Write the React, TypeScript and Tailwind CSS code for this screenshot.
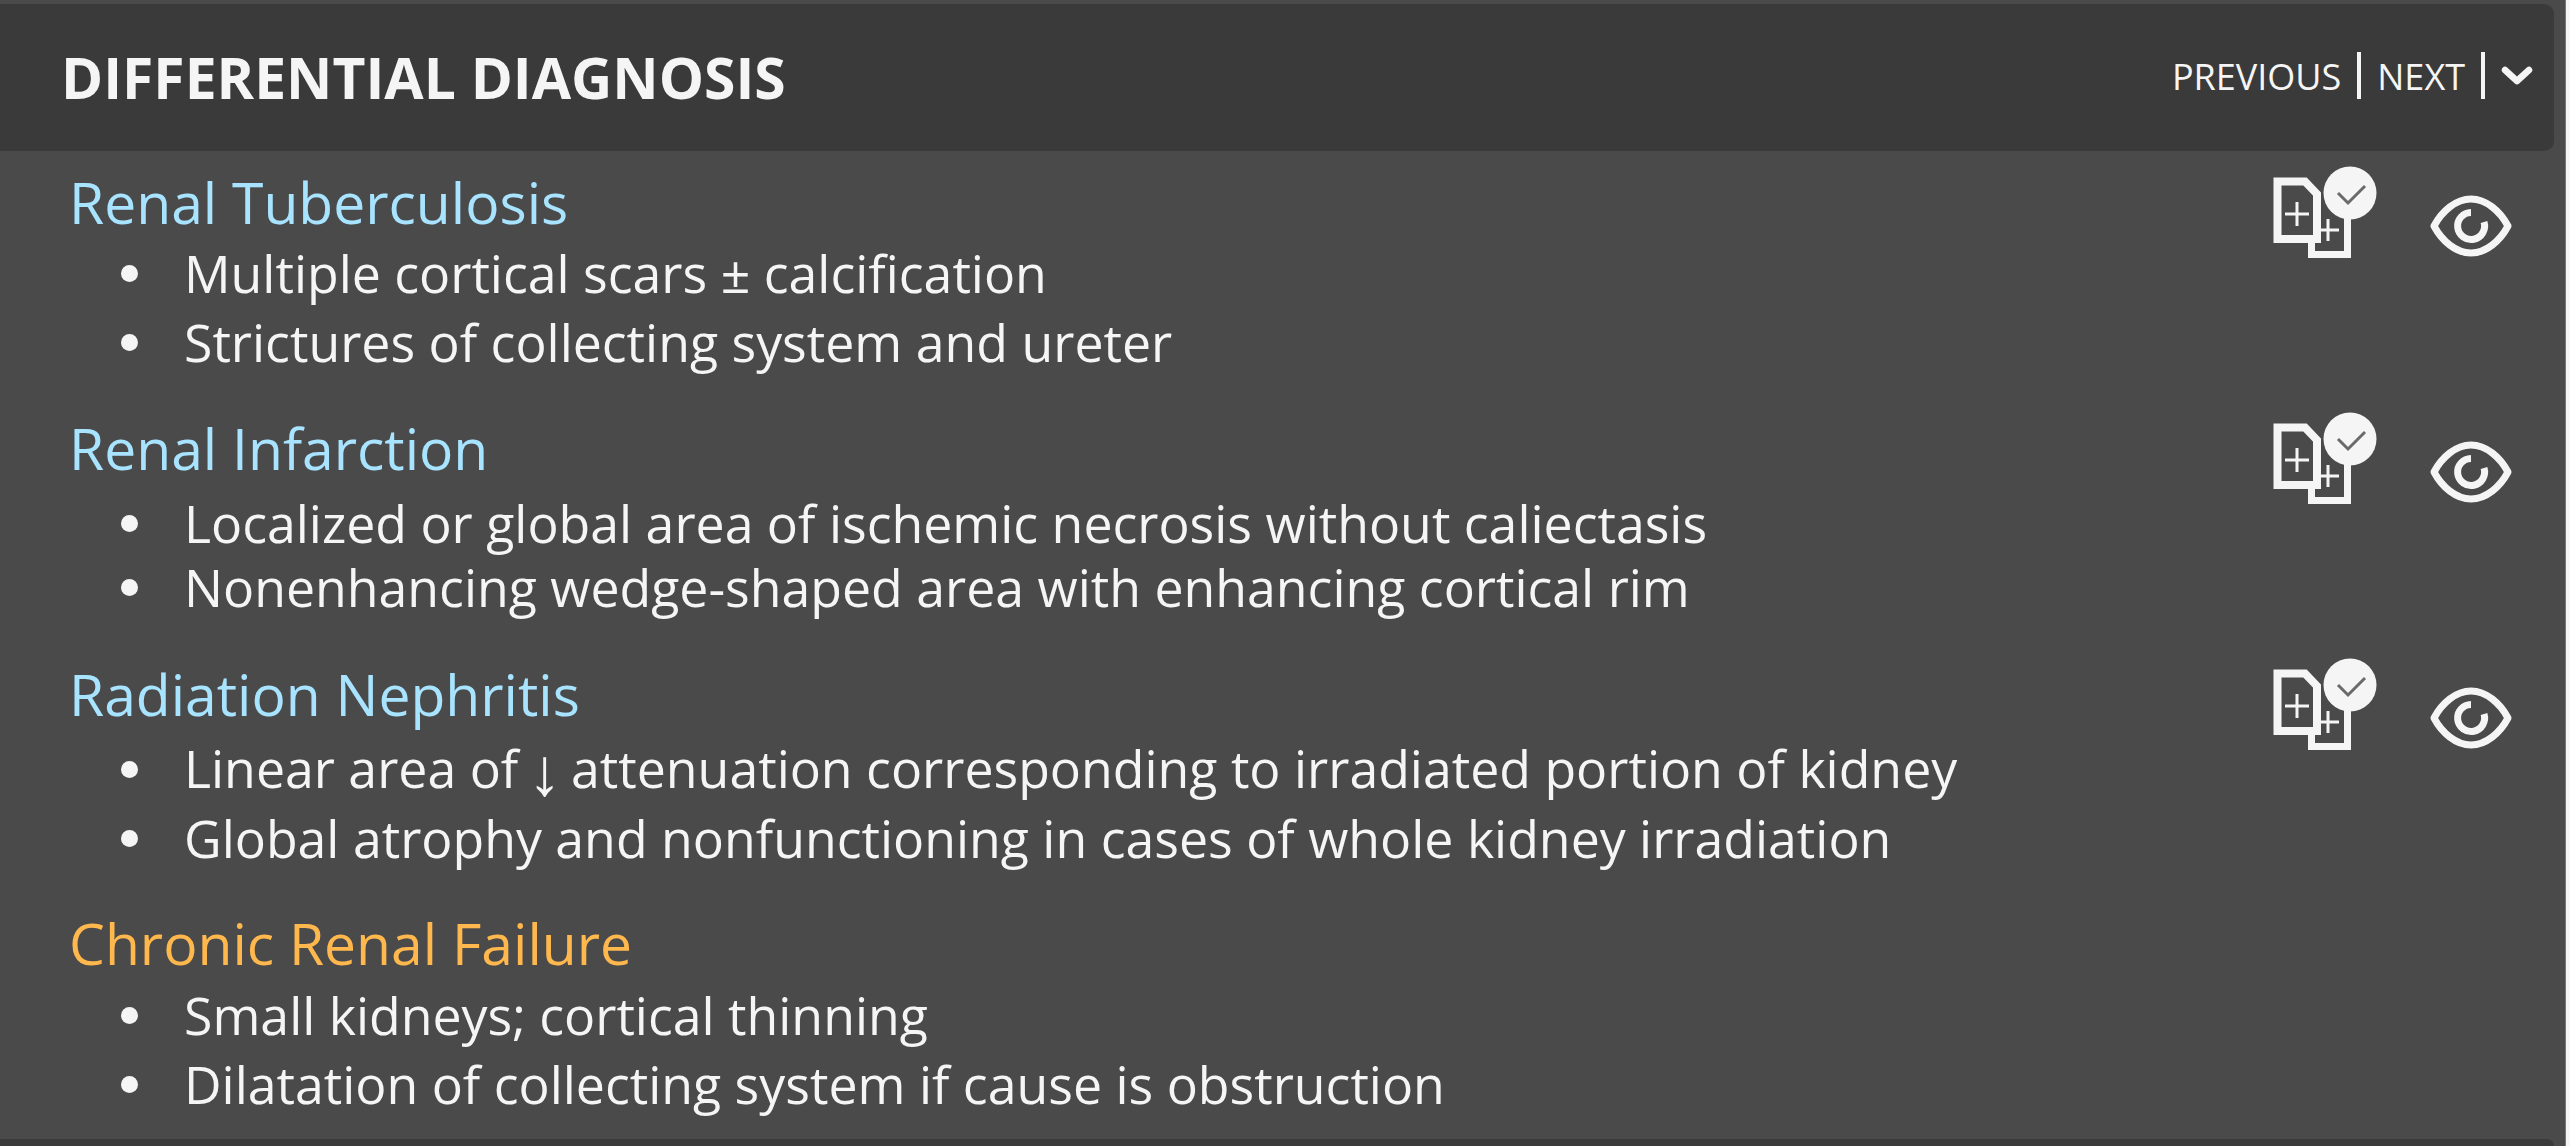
const font = { fontFamily: '"Open Sans", sans-serif' };

const sections = [
  {
    title: "Renal Tuberculosis",
    color: "text-[#a8e4ff]",
    tools: true,
    top: "mt-[5px]",
    gap: "gap-[7px]",
    bottom: "mb-[1px]",
    items: ["Multiple cortical scars ± calcification", "Strictures of collecting system and ureter"],
  },
  {
    title: "Renal Infarction",
    color: "text-[#a8e4ff]",
    tools: true,
    top: "mt-[9px]",
    gap: "gap-[2px]",
    bottom: "mb-[2px]",
    items: [
      "Localized or global area of ischemic necrosis without caliectasis",
      "Nonenhancing wedge-shaped area with enhancing cortical rim",
    ],
  },
  {
    title: "Radiation Nephritis",
    color: "text-[#a8e4ff]",
    tools: true,
    top: "mt-[9px]",
    gap: "gap-[7px]",
    bottom: "mb-0",
    items: [
      <>
        Linear area of{" "}
        <span className="inline-block font-['Liberation_Sans'] scale-[1.3] translate-y-[2px]">↓</span> attenuation
        corresponding to irradiated portion of kidney
      </>,
      "Global atrophy and nonfunctioning in cases of whole kidney irradiation",
    ],
  },
  {
    title: "Chronic Renal Failure",
    color: "text-[#ffb84d]",
    tools: false,
    top: "mt-[6px]",
    gap: "gap-[7px]",
    bottom: "mb-0",
    items: ["Small kidneys; cortical thinning", "Dilatation of collecting system if cause is obstruction"],
  },
];

const CompareIcon = () => (
  <svg width="106" height="94" viewBox="0 0 106 94" fill="none" className="blur-[0.6px]">
    <path d="M4.5 15.5H32L44 28V73H4.5Z" stroke="#f5f5f5" strokeWidth="8" />
    <path d="M38.5 73V88.5H74.5V50" stroke="#f5f5f5" strokeWidth="7" />
    <path d="M12 48H36M24 36V60" stroke="#f5f5f5" strokeWidth="3" />
    <path d="M44 64H66M55 53V75" stroke="#f5f5f5" strokeWidth="3" />
    <circle cx="77" cy="27" r="26.5" fill="#f5f5f5" />
    <path d="M65 27L75 37L92 20" stroke="#6a6a6a" strokeWidth="3" />
  </svg>
);

const EyeIcon = () => (
  <svg width="82" height="62" viewBox="0 0 82 62" fill="none" stroke="#f5f5f5">
    <path
      d="M4 31C12 16 26 4 41 4C56 4 70 16 78 31C70 46 56 58 41 58C26 58 12 46 4 31Z"
      strokeWidth="7"
      strokeLinejoin="round"
    />
    <path d="M41 17.5A13.5 13.5 0 1 0 54 27" strokeWidth="7" />
  </svg>
);

const Chevron = () => (
  <svg width="32" height="22" viewBox="0 0 32 22" fill="none">
    <path d="M4 5L16 16L28 5" stroke="#f5f5f5" strokeWidth="6.5" strokeLinecap="round" strokeLinejoin="round" />
  </svg>
);

const Section = ({ data }: { data: (typeof sections)[number] }) => (
  <div className={`flex justify-between items-start ${data.bottom}`}>
    <div>
      <h2 className={`text-[57px] leading-[70px] -mt-[1px] ${data.color}`}>{data.title}</h2>
      <ul className={`flex flex-col ${data.gap} ${data.top}`}>
        {data.items.map((item, index) => (
          <li key={index} className="flex items-center h-[62px] text-[51.8px] leading-[62px] text-[#f5f5f5]">
            <span className="ml-[52px] mr-[46px] w-[17px] h-[17px] rounded-full bg-[#f5f5f5]" />
            <span className="whitespace-pre">{item}</span>
          </li>
        ))}
      </ul>
    </div>
    {data.tools && (
      <div className="flex items-start gap-[51px] mr-[53px] mt-[-2px]">
        <CompareIcon />
        <div className="mt-[29px]">
          <EyeIcon />
        </div>
      </div>
    )}
  </div>
);

const App = () => (
  <div style={font} className="w-[2570px] h-[1146px] bg-[#f5f5f5] overflow-hidden flex">
    <div className="w-[2566px] h-full bg-[#4a4a4a] border-r border-[#777777] flex flex-col pt-[4px]">
      <div className="h-[147px] w-[2554px] bg-[#3a3a3a] rounded-r-[10px] flex justify-between pl-[61px] pr-[21px] pt-[38px]">
        <h1 className="text-[57px] leading-[70px] font-bold text-[#f5f5f5]">DIFFERENTIAL DIAGNOSIS</h1>
        <div className="flex items-start text-[36px] text-[#f5f5f5] h-[48px] leading-[50px] mt-[10px]">
          <span>PREVIOUS</span>
          <span className="ml-[16px] mr-[16px] w-[4px] h-[47px] bg-[#f5f5f5]" />
          <span>NEXT</span>
          <span className="ml-[16px] mr-[16px] w-[4px] h-[47px] bg-[#f5f5f5]" />
          <div className="mt-[13px]">
            <Chevron />
          </div>
        </div>
      </div>
      <div className="flex-1 flex flex-col gap-[40px] pl-[69px] pt-[17px]">
        {sections.map((s) => (
          <Section key={s.title} data={s} />
        ))}
      </div>
      <div className="h-[7px] w-[2554px] bg-[#3a3a3a] rounded-tr-[10px]" />
    </div>
  </div>
);

export default App;
